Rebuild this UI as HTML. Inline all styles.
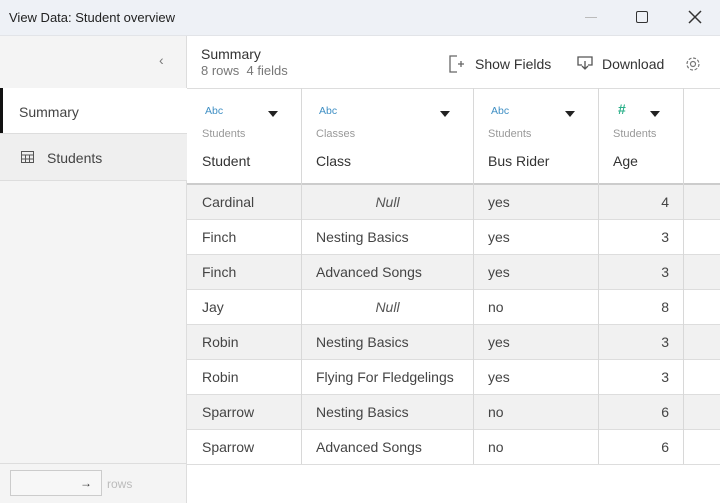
<!DOCTYPE html>
<html><head><style>
*{margin:0;padding:0;box-sizing:border-box}
body{width:720px;height:503px;overflow:hidden;background:#fff;font-family:"Liberation Sans",sans-serif;color:#333;position:relative}
.a{position:absolute}
.title{left:0;top:0;width:720px;height:36px;background:#eef1f6;border-bottom:1px solid #e2e4e8}
.side{left:0;top:36px;width:187px;height:467px;background:#f4f4f4;border-right:1px solid #ddd}
.row{left:187px;width:533px;height:35px;border-bottom:1px solid #ddd}
.g{background:#f1f1f1}
.vl{top:88px;width:1px;height:376px;background:#d8d8d8}
.t{font-size:14px;color:#444}
.abc{font-size:10.5px;color:#3f8fc4}
.src{font-size:11px;color:#999}
.hd{font-size:14px;color:#333}
.tri{width:0;height:0;border-left:5px solid transparent;border-right:5px solid transparent;border-top:6px solid #222}
</style></head><body>
<div class="a title"></div>
<div class="a" style="left:9px;top:10px;font-size:13px;color:#222">View Data: Student overview</div>
<div class="a" style="left:585px;top:17px;width:12px;height:1px;background:#bbb"></div>
<div class="a" style="left:636px;top:11px;width:12px;height:12px;border:1.5px solid #333;border-radius:2px"></div>
<svg class="a" style="left:688px;top:10px" width="14" height="14"><path d="M1 1L13 13M13 1L1 13" stroke="#333" stroke-width="1.5"/></svg>

<div class="a side"></div>
<div class="a" style="left:0;top:88px;width:187px;height:46px;background:#fff;border-bottom:1px solid #ddd"></div>
<div class="a" style="left:0;top:88px;width:3px;height:45px;background:#111"></div>
<div class="a" style="left:159px;top:52px;font-size:14px;color:#777">&lsaquo;</div>
<div class="a t" style="left:19px;top:104px">Summary</div>
<div class="a" style="left:0;top:134px;width:187px;height:47px;background:#efefef;border-bottom:1px solid #ddd"></div>
<svg class="a" style="left:21px;top:151px" width="13" height="12"><rect x="0.5" y="0.5" width="12" height="11" fill="none" stroke="#555"/><path d="M0 4H13M0 8H13M4.5 4V12M8.5 4V12" stroke="#555"/></svg>
<div class="a t" style="left:47px;top:150px">Students</div>
<div class="a" style="left:0;top:463px;width:187px;height:1px;background:#ddd"></div>
<div class="a" style="left:10px;top:470px;width:92px;height:26px;border:1px solid #ccc;background:#f7f7f7"></div>
<div class="a" style="left:80px;top:476px;font-size:12px;color:#333">&rarr;</div>
<div class="a" style="left:107px;top:477px;font-size:12px;color:#bbb">rows</div>

<div class="a" style="left:201px;top:46px;font-size:14px;color:#333">Summary</div>
<div class="a" style="left:201px;top:63px;font-size:13px;color:#777">8 rows&nbsp; 4 fields</div>
<svg class="a" style="left:448px;top:55px" width="18" height="18"><path d="M9 1H2V17H9" fill="none" stroke="#666" stroke-width="1.3"/><path d="M10 9H16M13 6V12" stroke="#666" stroke-width="1.3"/></svg>
<div class="a" style="left:475px;top:56px;font-size:14px;color:#333">Show Fields</div>
<svg class="a" style="left:576px;top:55px" width="18" height="16"><path d="M6 10H2V2H16V10H12" fill="none" stroke="#555" stroke-width="1.3"/><path d="M9 6V14M6 11L9 14L12 11" fill="none" stroke="#555" stroke-width="1.3"/></svg>
<div class="a" style="left:602px;top:56px;font-size:14px;color:#333">Download</div>
<svg class="a" style="left:684px;top:55px" width="18" height="18"><circle cx="9" cy="9" r="2.5" fill="none" stroke="#777" stroke-width="1.2"/><circle cx="9" cy="9" r="6" fill="none" stroke="#777" stroke-width="1.2" stroke-dasharray="3 1.7"/></svg>

<div class="a" style="left:187px;top:88px;width:533px;height:1px;background:#ddd"></div>
<div class="a" style="left:187px;top:183px;width:533px;height:2px;background:#ccc"></div>

<div class="a row g" style="top:185px"></div>
<div class="a row" style="top:220px"></div>
<div class="a row g" style="top:255px"></div>
<div class="a row" style="top:290px"></div>
<div class="a row g" style="top:325px"></div>
<div class="a row" style="top:360px"></div>
<div class="a row g" style="top:395px"></div>
<div class="a row" style="top:430px"></div>

<div class="a vl" style="left:301px"></div>
<div class="a vl" style="left:473px"></div>
<div class="a vl" style="left:598px"></div>
<div class="a vl" style="left:683px"></div>

<div class="a abc" style="left:205px;top:105px">Abc</div><div class="a tri" style="left:268px;top:111px"></div>
<div class="a src" style="left:202px;top:128px">Students</div><div class="a hd" style="left:202px;top:153px">Student</div>
<div class="a abc" style="left:319px;top:105px">Abc</div><div class="a tri" style="left:440px;top:111px"></div>
<div class="a src" style="left:316px;top:128px">Classes</div><div class="a hd" style="left:316px;top:153px">Class</div>
<div class="a abc" style="left:491px;top:105px">Abc</div><div class="a tri" style="left:565px;top:111px"></div>
<div class="a src" style="left:488px;top:128px">Students</div><div class="a hd" style="left:488px;top:153px">Bus Rider</div>
<div class="a" style="left:618px;top:101px;font-size:14px;font-weight:bold;color:#2bb08a">#</div><div class="a tri" style="left:650px;top:111px"></div>
<div class="a src" style="left:613px;top:128px">Students</div><div class="a hd" style="left:613px;top:153px">Age</div>

<div class="a t" style="left:202px;top:194px">Cardinal</div><div class="a t" style="left:302px;width:171px;text-align:center;top:194px;font-style:italic;color:#555">Null</div><div class="a t" style="left:488px;top:194px">yes</div><div class="a t" style="left:599px;width:70px;text-align:right;top:194px">4</div>
<div class="a t" style="left:202px;top:229px">Finch</div><div class="a t" style="left:316px;top:229px">Nesting Basics</div><div class="a t" style="left:488px;top:229px">yes</div><div class="a t" style="left:599px;width:70px;text-align:right;top:229px">3</div>
<div class="a t" style="left:202px;top:264px">Finch</div><div class="a t" style="left:316px;top:264px">Advanced Songs</div><div class="a t" style="left:488px;top:264px">yes</div><div class="a t" style="left:599px;width:70px;text-align:right;top:264px">3</div>
<div class="a t" style="left:202px;top:299px">Jay</div><div class="a t" style="left:302px;width:171px;text-align:center;top:299px;font-style:italic;color:#555">Null</div><div class="a t" style="left:488px;top:299px">no</div><div class="a t" style="left:599px;width:70px;text-align:right;top:299px">8</div>
<div class="a t" style="left:202px;top:334px">Robin</div><div class="a t" style="left:316px;top:334px">Nesting Basics</div><div class="a t" style="left:488px;top:334px">yes</div><div class="a t" style="left:599px;width:70px;text-align:right;top:334px">3</div>
<div class="a t" style="left:202px;top:369px">Robin</div><div class="a t" style="left:316px;top:369px">Flying For Fledgelings</div><div class="a t" style="left:488px;top:369px">yes</div><div class="a t" style="left:599px;width:70px;text-align:right;top:369px">3</div>
<div class="a t" style="left:202px;top:404px">Sparrow</div><div class="a t" style="left:316px;top:404px">Nesting Basics</div><div class="a t" style="left:488px;top:404px">no</div><div class="a t" style="left:599px;width:70px;text-align:right;top:404px">6</div>
<div class="a t" style="left:202px;top:439px">Sparrow</div><div class="a t" style="left:316px;top:439px">Advanced Songs</div><div class="a t" style="left:488px;top:439px">no</div><div class="a t" style="left:599px;width:70px;text-align:right;top:439px">6</div>
</body></html>
